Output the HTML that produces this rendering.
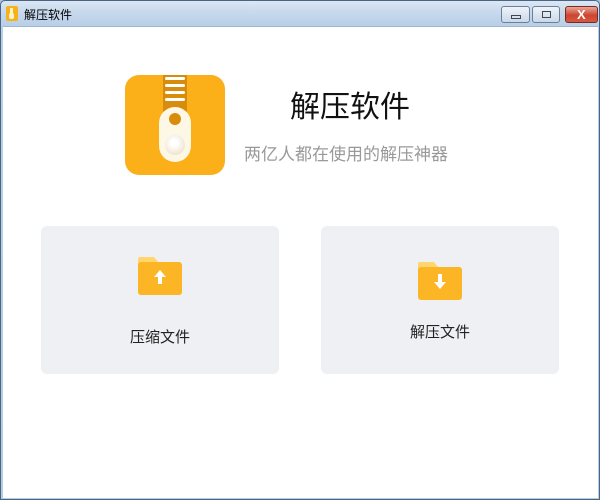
<!DOCTYPE html>
<html><head><meta charset="utf-8"><style>
*{margin:0;padding:0;box-sizing:border-box}
body{width:600px;height:500px;overflow:hidden;background:#a9c6dd;font-family:"Liberation Sans","Noto Sans CJK SC",sans-serif;position:relative}
.frame{position:absolute;left:0;top:0;width:600px;height:500px;border:1px solid #4a6584;border-radius:5px 5px 0 0;background:linear-gradient(#dce7f4 0,#c6d8ec 12px,#b9cfe7 25px,#b4cde3 100%)}
.client{position:absolute;left:2px;top:25px;width:595px;height:472px;background:#fff;border-top:1px solid #9fb6cf}
.title{position:absolute;left:23px;top:5px;font-size:12px;color:#000}
.btn{position:absolute;top:5px;height:17px;border:1px solid #6b7f99;border-radius:3px;background:linear-gradient(#eef3f9,#cbd9e8)}
.cards .card{position:absolute;top:226px;width:238px;height:148px;background:#eff0f4;border-radius:6px}
.lbl{position:absolute;width:238px;text-align:center;font-size:15px;color:#222}
</style></head><body>
<div class="frame">
  <div style="position:absolute;left:5px;top:5px;width:12px;height:15px;background:#f5b21b;border-radius:2px"><div style="position:absolute;left:4px;top:2px;width:3px;height:5px;background:#fff3c8"></div><div style="position:absolute;left:3px;top:7px;width:5px;height:6px;background:#fff3c8;border-radius:2px"></div></div>
  <div class="title">解压软件</div>
  <div class="btn" style="left:500px;width:29px"><div style="position:absolute;left:9px;top:8px;width:10px;height:4px;border:1px solid #445"></div></div>
  <div class="btn" style="left:531px;width:28px"><div style="position:absolute;left:9px;top:4px;width:9px;height:7px;border:1px solid #445"></div></div>
  <div class="btn" style="left:564px;width:33px;border-color:#7a2a20;background:linear-gradient(#e9a797,#cb4530 55%,#d65a42)"><div style="position:absolute;left:11px;top:0px;color:#fff;font-weight:bold;font-size:13px">X</div></div>
  <div class="client"></div>
</div>
<div style="position:absolute;left:125px;top:75px;width:100px;height:100px;background:#fbb01a;border-radius:14px;overflow:hidden">
  <div style="position:absolute;left:38px;top:0;width:24px;height:40px;background:#d88c0c"></div>
  <div style="position:absolute;left:40px;top:2px;width:20px;height:3px;background:#fff;border-radius:2px"></div>
  <div style="position:absolute;left:40px;top:9px;width:20px;height:3px;background:#fff;border-radius:2px"></div>
  <div style="position:absolute;left:40px;top:16px;width:20px;height:3px;background:#fff;border-radius:2px"></div>
  <div style="position:absolute;left:40px;top:23px;width:20px;height:3px;background:#fff;border-radius:2px"></div>
  <div style="position:absolute;left:34px;top:32px;width:32px;height:55px;background:#fdf7e6;border-radius:16px"></div>
  <div style="position:absolute;left:44px;top:38px;width:12px;height:12px;background:#d88c0c;border-radius:50%"></div>
  <div style="position:absolute;left:40px;top:60px;width:20px;height:20px;background:radial-gradient(circle at 45% 40%,#fff 20%,#e9dcc0 90%);border-radius:50%"></div>
</div>
<div style="position:absolute;left:290px;top:82px;font-size:30px;color:#111">解压软件</div>
<div style="position:absolute;left:244px;top:140px;font-size:17px;color:#999">两亿人都在使用的解压神器</div>
<div class="cards">
  <div class="card" style="left:41px"></div>
  <div class="card" style="left:321px"></div>
</div>
<svg style="position:absolute;left:137px;top:254px" width="46" height="42" viewBox="0 0 46 42">
  <path d="M3 3h14l4 5h20a3 3 0 0 1 3 3v4H1V5a2 2 0 0 1 2-2z" fill="#ffd66e"/>
  <rect x="1" y="8" width="44" height="33" rx="3" fill="#fbb525"/>
  <path d="M23 16l6 7h-4v7h-4v-7h-4z" fill="#fff"/>
</svg>
<svg style="position:absolute;left:417px;top:261px" width="46" height="40" viewBox="0 0 46 40">
  <path d="M3 1h14l4 5h20a3 3 0 0 1 3 3v4H1V3a2 2 0 0 1 2-2z" fill="#ffd66e"/>
  <rect x="1" y="6" width="44" height="33" rx="3" fill="#fbb525"/>
  <path d="M21 13h4v8h4l-6 7-6-7h4z" fill="#fff"/>
</svg>
<div class="lbl" style="left:41px;top:326px">压缩文件</div>
<div class="lbl" style="left:321px;top:321px">解压文件</div>
</body></html>
